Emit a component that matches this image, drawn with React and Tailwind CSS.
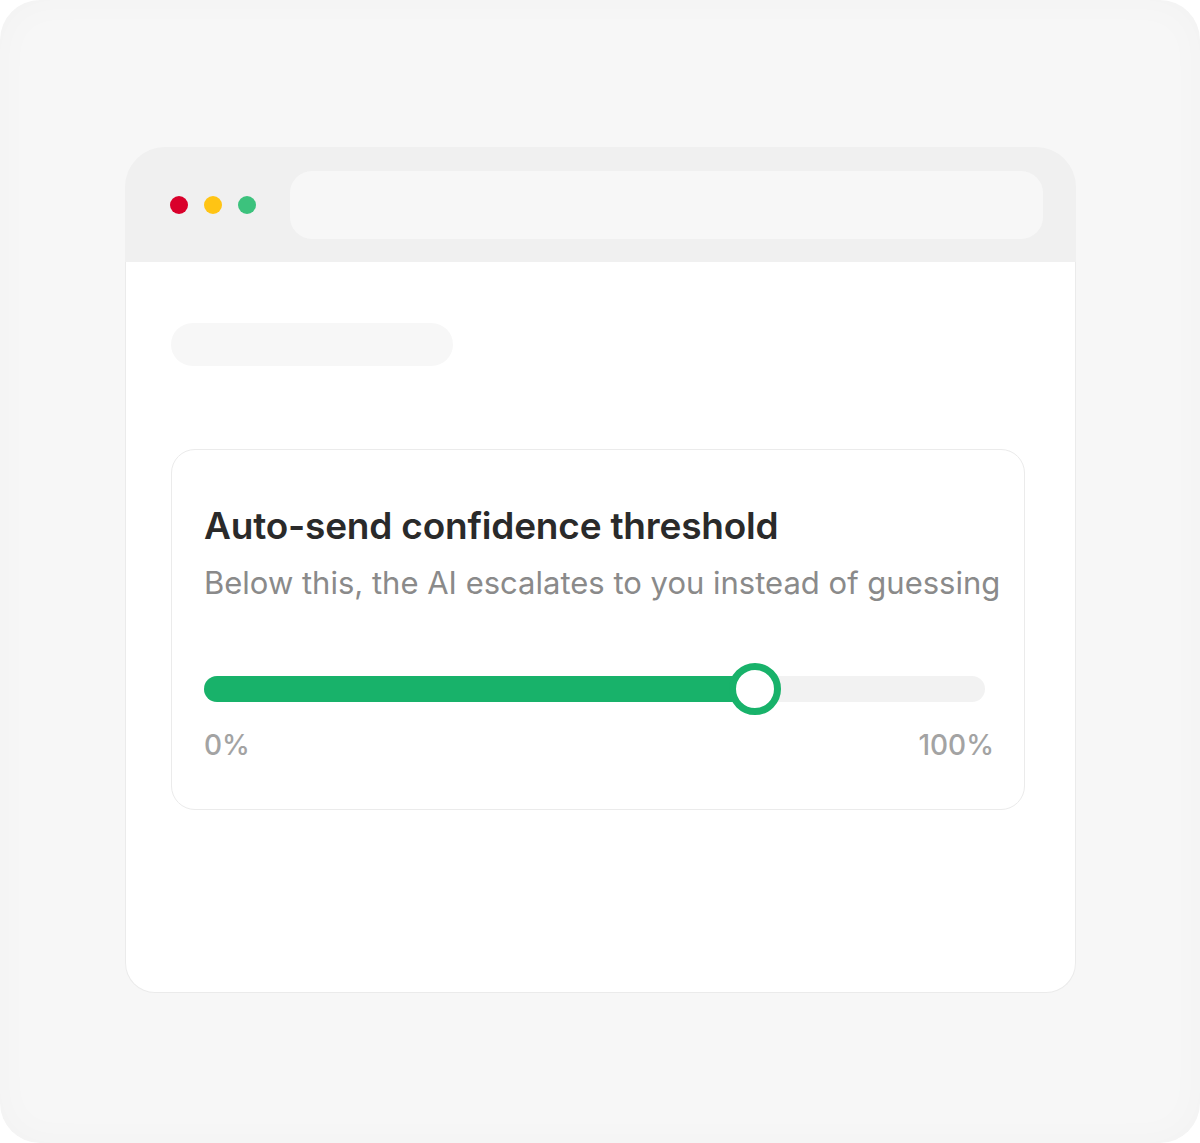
export default function App() {
    const value = 70.6;

    return (
        <div className="w-[1200px] h-[1143px] bg-white" style={{ fontFamily: 'Inter, "Noto Sans", sans-serif' }}>
            <div className="w-full h-full rounded-[40px] bg-[#f7f7f7] shadow-[inset_0_0_40px_rgba(0,0,0,0.025)] pt-[147px] pl-[125px]">
                <div className="w-[951px] h-[846px] flex flex-col">
                    <div className="h-[115px] shrink-0 bg-[#f0f0f0] rounded-t-[40px] flex items-center pl-[45px] pr-[33px]">
                        <div className="flex items-center gap-[16px]">
                            <span className="w-[18px] h-[18px] rounded-full bg-[#d9002b]" />
                            <span className="w-[18px] h-[18px] rounded-full bg-[#ffc414]" />
                            <span className="w-[18px] h-[18px] rounded-full bg-[#3cc27d]" />
                        </div>
                        <div className="ml-[34px] flex-1 h-[68px] rounded-[22px] bg-[#f7f7f7]" />
                    </div>
                    <div className="flex-1 bg-white border-x border-b border-[#ebebeb] rounded-b-[30px] pt-[61px] pl-[45px]">
                        <div className="w-[282px] h-[43px] rounded-full bg-[#f7f7f7]" />
                        <div className="mt-[83px] w-[854px] h-[361px] rounded-[24px] border border-[#ebebeb] bg-white pl-[32px] pr-[30px] pt-[54px]">
                            <h2 className="text-[37px] leading-[44px] font-semibold text-[#2a2a2a] tracking-[-0.2px] whitespace-nowrap">
                                Auto-send confidence threshold
                            </h2>
                            <p className="mt-[16px] text-[31px] leading-[38px] text-[#8a8a8a] whitespace-nowrap">
                                Below this, the AI escalates to you instead of guessing
                            </p>
                            <div className="mt-[74px] mr-[9px] relative h-[26px] rounded-full bg-[#f2f2f2]">
                                <div className="h-full rounded-full bg-[#18b26a]" style={{ width: `${value}%` }} />
                                <div
                                    className="absolute top-1/2 w-[52px] h-[52px] -translate-x-1/2 -translate-y-1/2 rounded-full bg-white border-[7px] border-[#18b26a]"
                                    style={{ left: `${value}%` }}
                                />
                            </div>
                            <div className="mt-[27px] flex justify-between text-[28px] leading-[32px] font-medium text-[#a3a3a3]">
                                <span>0%</span>
                                <span>100%</span>
                            </div>
                        </div>
                    </div>
                </div>
            </div>
        </div>
    );
}
